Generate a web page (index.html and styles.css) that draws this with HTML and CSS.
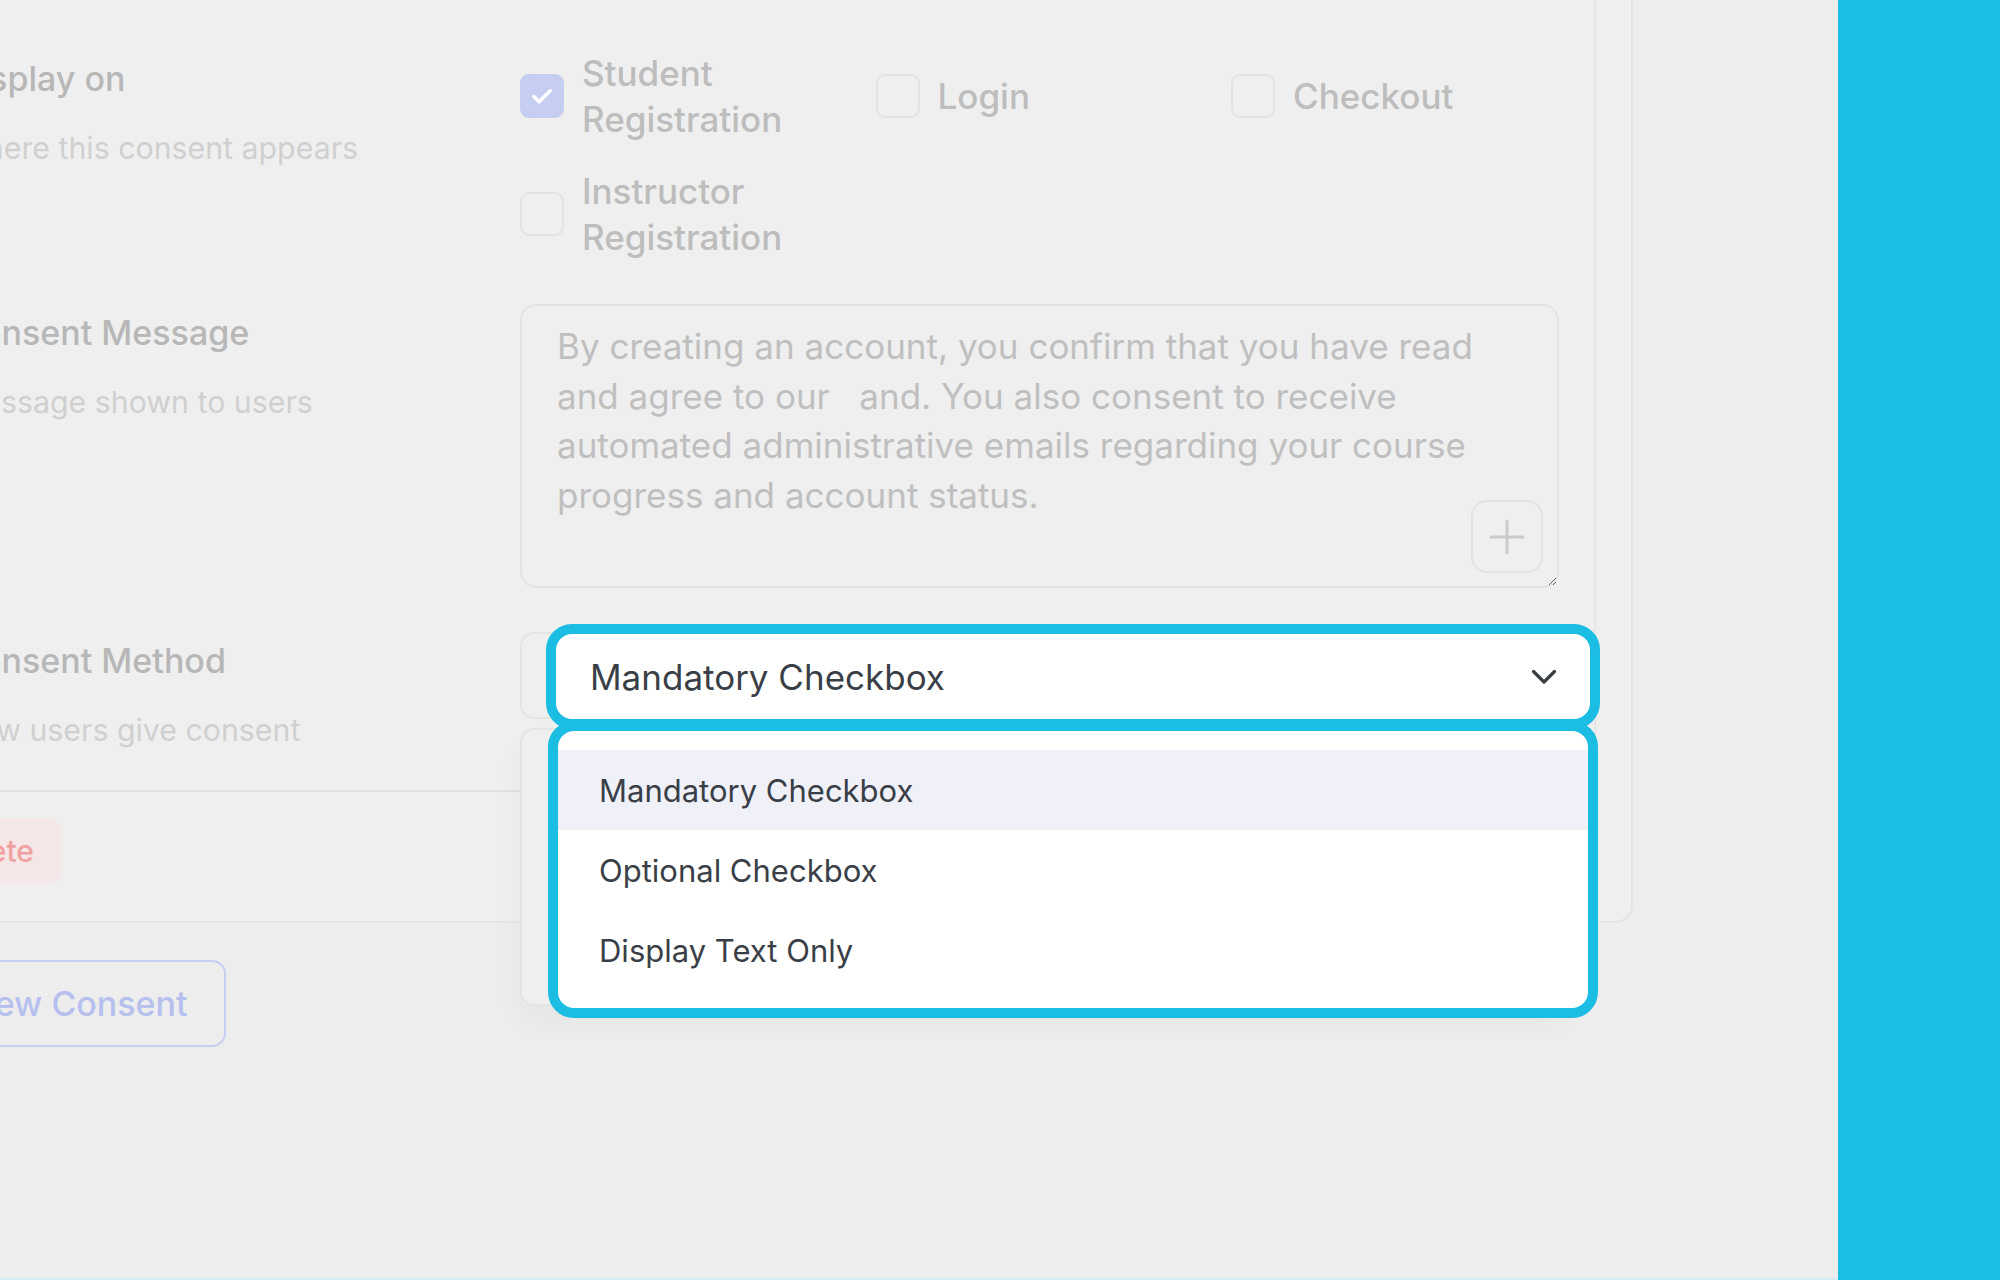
FILE: index.html
```html
<!DOCTYPE html>
<html lang="en">
<head>
<meta charset="utf-8">
<title>Consent settings</title>
<link rel="stylesheet" href="styles.css">
</head>
<body>
<div class="stage">
  <main class="main">
    <div class="page">
      <section class="card">
        <div class="card-inner">
          <div class="rows">
            <div class="row">
              <div class="label-block">
                <div class="label">Display on</div>
                <div class="sublabel">Where this consent appears</div>
              </div>
              <div class="check-grid">
                <label class="check-item">
                  <span class="box checked"><svg viewBox="0 0 24 24" width="28" height="28"><path d="M5 12.5l4.5 4.5L19 7.5" fill="none" stroke="#fff" stroke-width="3" stroke-linecap="round" stroke-linejoin="round"/></svg></span>
                  <span class="check-text">Student Registration</span>
                </label>
                <label class="check-item">
                  <span class="box"></span>
                  <span class="check-text">Login</span>
                </label>
                <label class="check-item">
                  <span class="box"></span>
                  <span class="check-text">Checkout</span>
                </label>
                <label class="check-item">
                  <span class="box"></span>
                  <span class="check-text">Instructor Registration</span>
                </label>
              </div>
            </div>

            <div class="row">
              <div class="label-block">
                <div class="label">Consent Message</div>
                <div class="sublabel">Message shown to users</div>
              </div>
              <div class="ta-wrap">
                <textarea class="message">By creating an account, you confirm that you have read and agree to our   and. You also consent to receive automated administrative emails regarding your course progress and account status.</textarea>
                <button type="button" class="plus-btn" aria-label="Insert link"><svg width="36" height="36" viewBox="0 0 36 36"><path d="M18 2v32M2 18h32" stroke="#cbcbcb" stroke-width="3" stroke-linecap="round"/></svg></button>
              </div>
            </div>

            <div class="row">
              <div class="label-block">
                <div class="label">Consent Method</div>
                <div class="sublabel">How users give consent</div>
              </div>
              <div class="select-wrap">
                <div class="select-faded"></div>
                <div class="list-faded"></div>
              </div>
            </div>
          </div>
          <div class="footer">
            <button type="button" class="btn-delete">Delete</button>
          </div>
        </div>
        <div class="card-gutter"></div>
      </section>
      <button type="button" class="btn-new">New Consent</button>
    </div>
  </main>
  <aside class="side"></aside>

  <div class="spot-select">
    <span class="spot-value">Mandatory Checkbox</span>
    <svg class="chev" width="26" height="16" viewBox="0 0 26 16"><path d="M2.5 2.5L13 13L23.5 2.5" fill="none" stroke="#3a3f47" stroke-width="3.2" stroke-linecap="round" stroke-linejoin="round"/></svg>
  </div>
  <div class="spot-list">
    <div class="option active">Mandatory Checkbox</div>
    <div class="option">Optional Checkbox</div>
    <div class="option">Display Text Only</div>
  </div>
</div>
</body>
</html>
```
FILE: styles.css
```css
* { box-sizing: border-box; }
html, body { margin: 0; padding: 0; }
body {
  width: 2000px;
  height: 1280px;
  overflow: hidden;
  background: #ededed;
  font-family: Inter, "Noto Sans", sans-serif;
}
.stage {
  position: relative;
  width: 2000px;
  height: 1280px;
  display: flex;
}
.main {
  flex: 0 0 1838px;
  height: 1280px;
  overflow: hidden;
  border-bottom: 2px solid #d3ecf3;
}
.side {
  flex: 1;
  background: #1bbde3;
}
.page {
  margin-left: -100px;
  margin-top: -40px;
  display: flex;
  flex-direction: column;
  align-items: flex-start;
}
.card {
  width: 1733px;
  display: flex;
  border: 2px solid #e4e4e4;
  border-radius: 18px;
  background: #efefef;
}
.card-inner {
  flex: 1;
  border-right: 2px solid #e6e6e6;
}
.card-gutter { width: 35px; }
.rows {
  padding: 88px 35px 37px 54px;
  display: flex;
  flex-direction: column;
  gap: 44px;
}
.row {
  display: grid;
  grid-template-columns: 564px 1039px;
}
.label-block { padding-top: 5px; }
.label {
  font-size: 34px;
  font-weight: 500;
  line-height: 48px;
  color: #b7b7b7;
  white-space: nowrap;
}
.sublabel {
  margin-top: 23px;
  font-size: 30.3px;
  line-height: 45px;
  color: #d0d0d0;
  white-space: nowrap;
}
.check-grid {
  display: grid;
  grid-template-columns: repeat(3, 328px);
  column-gap: 27.5px;
  row-gap: 26px;
  align-items: center;
}
.check-item {
  display: flex;
  align-items: center;
  gap: 18px;
  font-size: 35px;
  font-weight: 500;
  line-height: 46px;
  color: #bdbdbd;
}
.box {
  flex: 0 0 44px;
  height: 44px;
  border-radius: 9px;
  border: 2px solid #e3e3e3;
  display: flex;
  align-items: center;
  justify-content: center;
}
.box.checked {
  background: #c5cef1;
  border-color: #c5cef1;
}
.ta-wrap {
  position: relative;
  height: 284px;
}
.message {
  display: block;
  width: 100%;
  height: 284px;
  margin: 0;
  border: 2px solid #e3e3e3;
  border-radius: 16px;
  background: #efefef;
  padding: 16px 48px 16px 35px;
  font-family: inherit;
  font-size: 35px;
  line-height: 49.5px;
  color: #bfbfbf;
  outline: none;
}
.plus-btn {
  position: absolute;
  right: 16px;
  bottom: 15px;
  width: 72px;
  height: 73px;
  border: 2px solid #e2e2e2;
  border-radius: 16px;
  background: #efefef;
  display: flex;
  align-items: center;
  justify-content: center;
  padding: 0;
}
.select-wrap { position: relative; }
.select-faded {
  height: 87px;
  border: 2px solid #e4e4e4;
  border-radius: 14px;
  background: #efefef;
}
.list-faded {
  position: absolute;
  left: 0;
  right: -10px;
  top: 96px;
  height: 278px;
  border: 2px solid #e4e4e4;
  border-radius: 14px;
  background: #efefef;
  box-shadow: 0 16px 30px rgba(0, 0, 0, 0.035);
  z-index: 1;
}
.footer {
  border-top: 2px solid #e3e3e3;
  padding: 26px 0 37px 13px;
}
.btn-delete {
  height: 66px;
  padding: 0 27px;
  border: none;
  border-radius: 12px;
  background: #f5e7e7;
  color: #f0a2a2;
  font-family: inherit;
  font-size: 30px;
  font-weight: 500;
}
.btn-new {
  margin-top: 37px;
  margin-left: 31px;
  height: 87px;
  padding: 0 36px;
  border: 2px solid #c6cef1;
  border-radius: 14px;
  background: transparent;
  color: #b5c0ee;
  font-family: inherit;
  font-size: 34px;
  font-weight: 500;
}
.spot-select {
  position: absolute;
  left: 546px;
  top: 624px;
  width: 1054px;
  height: 105px;
  border: 10px solid #1bbde2;
  border-radius: 26px;
  background: #fff;
  display: flex;
  align-items: center;
  justify-content: space-between;
  padding: 0 33px 0 34px;
  z-index: 5;
}
.spot-value {
  font-size: 35px;
  color: #3a3f47;
}
.spot-list {
  position: absolute;
  left: 548px;
  top: 721px;
  width: 1050px;
  height: 297px;
  border: 10px solid #1bbde2;
  border-radius: 26px;
  background: #fff;
  padding: 19px 0 18px;
  z-index: 4;
  overflow: hidden;
}
.option {
  height: 80px;
  display: flex;
  align-items: center;
  padding-left: 41px;
  font-size: 31px;
  color: #3a3f47;
}
.option.active { background: #eff0f8; }
```
